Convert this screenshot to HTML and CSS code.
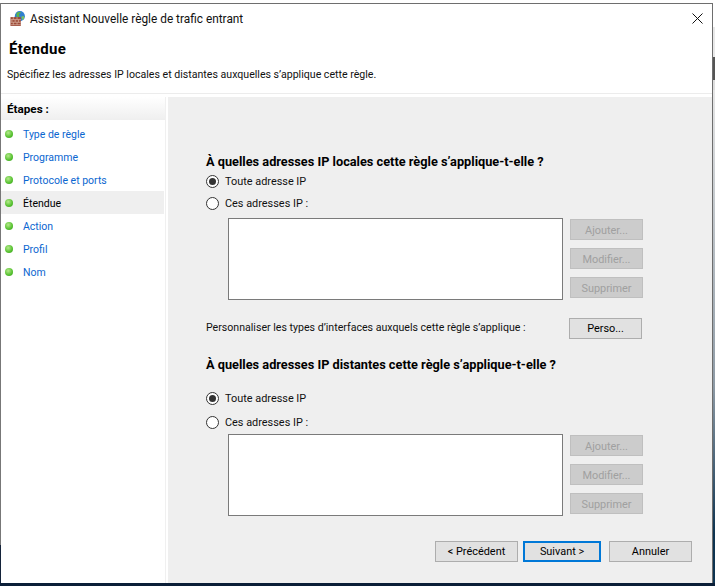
FILE: index.html
```html
<!DOCTYPE html>
<html lang="fr">
<head>
<meta charset="utf-8">
<title>Assistant Nouvelle règle de trafic entrant</title>
<link rel="stylesheet" href="styles.css">
</head>
<body>
<div class="desk">
  <div class="row">
    <div class="left-edge"></div>
    <div class="window">
      <div class="titlebar">
        <svg class="app-icon" viewBox="0 0 16 16" width="15" height="15">
          <circle cx="10.500" cy="5.500" r="5.400" fill="#2f7fd0"/>
          <path d="M7 2.200c1.600-1.400 4-1.500 5-.6-.6 1-1.800.8-2.300 1.800-.5 1 .8 1.400.2 2.400-.5.800-1.800.4-3 .4z" fill="#5fb548"/>
          <path d="M12 6c1.200-.5 2.600-.4 3.400-.2-.1 1.600-1 3.200-2.300 3.800z" fill="#7cc35c"/>
          <rect x="0.500" y="6.500" width="11" height="9.500" fill="#9c4a38"/>
          <path d="M.5 9.200h11M.5 12h11M.5 14.700h11M3.500 6.500v2.700M7.500 6.500v2.700M2 9.200V12M5.500 9.200V12M9 9.200V12M3.500 12v2.700M7.500 12v2.700" stroke="#d9b2a0" stroke-width=".8" fill="none"/>
        </svg>
        <span class="title">Assistant Nouvelle règle de trafic entrant</span>
        <svg class="close" viewBox="0 0 11 11" width="11" height="11">
          <path d="M.5.500l10 10M10.500.500l-10 10" stroke="#111" stroke-width="1" fill="none"/>
        </svg>
      </div>
      <div class="banner">
        <h1 class="page-title">Étendue</h1>
        <p class="page-sub">Spécifiez les adresses IP locales et distantes auxquelles s’applique cette règle.</p>
      </div>
      <div class="body">
        <nav class="steps">
          <div class="steps-head">Étapes :</div>
          <ul class="step-list">
            <li class="step"><span class="dot"></span><span class="step-link">Type de règle</span></li>
            <li class="step"><span class="dot"></span><span class="step-link">Programme</span></li>
            <li class="step"><span class="dot"></span><span class="step-link">Protocole et ports</span></li>
            <li class="step current"><span class="dot"></span><span class="step-now">Étendue</span></li>
            <li class="step"><span class="dot"></span><span class="step-link">Action</span></li>
            <li class="step"><span class="dot"></span><span class="step-link">Profil</span></li>
            <li class="step"><span class="dot"></span><span class="step-link">Nom</span></li>
          </ul>
        </nav>
        <main class="main">
          <h2 class="q">À quelles adresses IP locales cette règle s’applique-t-elle ?</h2>
          <div class="radio r-a"><span class="rad on"></span>Toute adresse IP</div>
          <div class="radio r-b"><span class="rad"></span>Ces adresses IP :</div>
          <div class="listrow">
            <div class="listbox"></div>
            <div class="side">
              <button class="btn off">Ajouter...</button>
              <button class="btn off">Modifier...</button>
              <button class="btn off">Supprimer</button>
            </div>
          </div>
          <div class="custom">
            <span class="custom-label">Personnaliser les types d’interfaces auxquels cette règle s’applique :</span>
            <button class="btn perso">Perso...</button>
          </div>
          <h2 class="q q-remote">À quelles adresses IP distantes cette règle s’applique-t-elle ?</h2>
          <div class="radio r-c"><span class="rad on"></span>Toute adresse IP</div>
          <div class="radio r-d"><span class="rad"></span>Ces adresses IP :</div>
          <div class="listrow second">
            <div class="listbox"></div>
            <div class="side">
              <button class="btn off">Ajouter...</button>
              <button class="btn off">Modifier...</button>
              <button class="btn off">Supprimer</button>
            </div>
          </div>
          <div class="footer">
            <button class="btn prev">&lt; Précédent</button>
            <button class="btn next">Suivant &gt;</button>
            <button class="btn cancel">Annuler</button>
          </div>
        </main>
      </div>
    </div>
    <div class="right-edge">
      <div class="e1"></div><div class="e2"></div><div class="e3"></div><div class="e4"></div><div class="e5"></div>
    </div>
  </div>
  <div class="taskbar"></div>
</div>
</body>
</html>
```
FILE: styles.css
```css
* { box-sizing: border-box; }
html, body { margin: 0; padding: 0; }
body {
  width: 715px;
  height: 586px;
  overflow: hidden;
  font-family: Roboto, "Liberation Sans", sans-serif;
  font-size: 10.900px;
  color: #111;
  background: #fff;
}
.desk { display: flex; flex-direction: column; height: 586px; }
.row { display: flex; height: 583px; }
.taskbar { height: 3px; background: #0b1f38; }
.left-edge {
  width: 1px;
  background: linear-gradient(#fff 0 3px, #777 3px 545px, #14233a 545px);
}
.window {
  width: 712px;
  height: 580px;
  margin-top: 3px;
  border-top: 1px solid #6e6e6e;
  border-right: 1px solid #6e6e6e;
  display: flex;
  flex-direction: column;
  background: #fff;
}
.right-edge {
  width: 2px;
  display: flex;
  flex-direction: column;
}
.right-edge div { flex: none; }
.e1 { height: 27px; background: #fff; }
.e2 { height: 30px; background: #e8e8e8; }
.e3 { height: 23px; background: #555; }
.e4 { height: 10px; background: #ddd; }
.e5 { height: 493px; background: linear-gradient(#e6e6e6, #8d9aa5 60%, #0d3350 90%); }

.titlebar {
  height: 30px;
  flex: none;
  display: flex;
  align-items: center;
  padding: 0 9px 0 9px;
}
.app-icon { margin: 0 5px 2px 0; flex: none; }
.title { font-size: 11.850px; flex: 1; color: #111; }
.close { flex: none; margin-bottom: 2px; }

.banner {
  height: 60px;
  flex: none;
  padding-top: 6px;
  border-bottom: 1px solid #ececec;
}
.page-title { margin: 0 0 0 8px; font-size: 15px; font-weight: 700; letter-spacing: .3px; line-height: 18px; color: #000; }
.page-sub { margin: 9px 0 0 6px; font-size: 10.600px; line-height: 16px; }

.body { flex: 1; display: flex; margin-top: 3px; min-height: 0; }
.steps {
  width: 165px;
  flex: none;
  background: #fff;
  border-right: 1px solid #f0f0f0;
}
.steps-head {
  height: 23px;
  padding-left: 6px;
  line-height: 25px;
  font-size: 11.700px;
  font-weight: 700;
  color: #000;
  background: linear-gradient(#fff, #efefef);
}
.step-list { list-style: none; margin: 2px 0 0; padding: 0; }
.step {
  height: 23px;
  display: flex;
  align-items: center;
  padding-left: 4px;
  margin-right: 1px;
  font-size: 10.500px;
}
.step.current { background: #efefef; color: #000; }
.dot {
  width: 8px;
  height: 8px;
  border-radius: 50%;
  margin-right: 10px;
  flex: none;
  background: radial-gradient(circle at 40% 35%, #b6ea8c, #55c02f 60%, #3e9e26);
}
.step-link { color: #0b66d0; padding-top: 2px; }
.step-now { padding-top: 2px; }

.main {
  flex: 1;
  margin-left: 2px;
  background: #efefef;
  padding: 57px 0 0 38px;
  display: flex;
  flex-direction: column;
}
.q { margin: 0; font-size: 12.750px; font-weight: 700; line-height: 16px; color: #000; }
.q-remote { margin-top: 18px; }
.radio { display: flex; align-items: center; height: 16px; }
.r-a { margin-top: 3px; }
.r-b { margin-top: 6px; }
.r-c { margin-top: 17px; }
.r-d { margin-top: 8px; }
.rad {
  width: 13px;
  height: 13px;
  border-radius: 50%;
  border: 1px solid #333;
  background: #fff;
  margin-right: 6px;
  flex: none;
  position: relative;
}
.rad.on::after {
  content: "";
  position: absolute;
  left: 2px;
  top: 2px;
  width: 7px;
  height: 7px;
  border-radius: 50%;
  background: #333;
}
.listrow { display: flex; margin: 7px 0 0 22px; }
.listrow.second { margin-top: 4px; }
.listbox { width: 335px; height: 82px; background: #fff; border: 1px solid #7a7a7a; }
.side { margin-left: 7px; padding-top: 1px; display: flex; flex-direction: column; gap: 8px; }
.btn {
  width: 73px;
  height: 21px;
  padding: 0;
  font: inherit;
  color: #000;
  background: #e1e1e1;
  border: 1px solid #adadad;
}
.btn.off { color: #a0a0a0; background: #ccc; border-color: #bfbfbf; padding-top: 2px; }
.custom { display: flex; align-items: center; justify-content: space-between; width: 436px; margin-top: 18px; }
.custom-label { font-size: 10.600px; margin-bottom: 2px; }
.footer { display: flex; margin: 25px 0 0 229px; }
.prev { width: 83px; }
.next { width: 78px; margin-left: 5px; border: 2px solid #0078d7; }
.cancel { width: 83px; margin-left: 8px; }
```
